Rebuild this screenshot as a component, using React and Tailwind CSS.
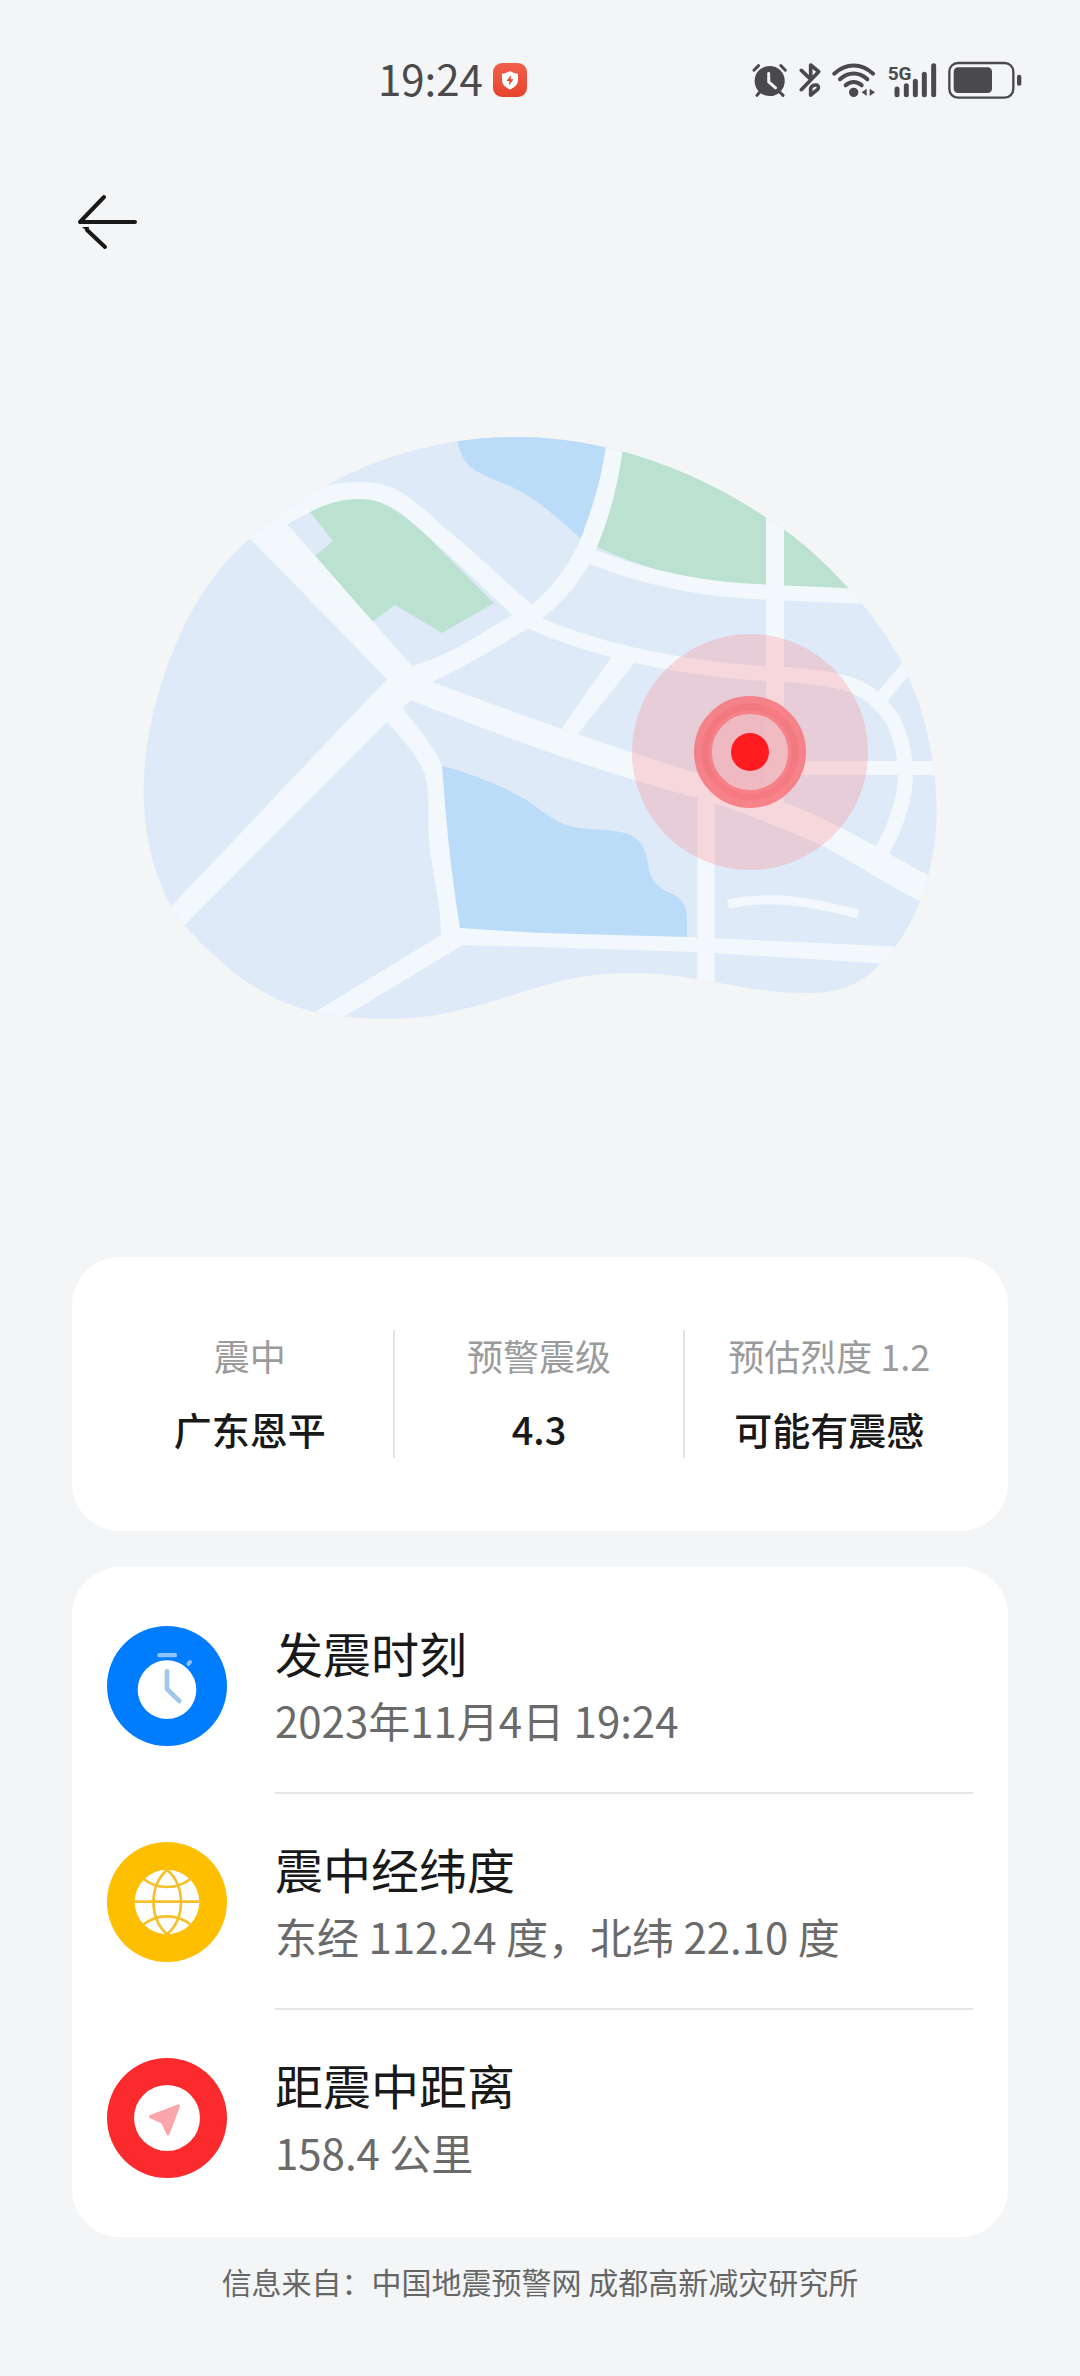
function StatusBar() {
  return (
    <header className="flex h-[104px] items-end justify-between pt-14 pl-[35%] pr-[58px] text-[#4a4a4c]">
      {/* Left: time and security badge */}
      <div className="flex h-12 items-center gap-[10px]">
        <span className="pb-1 text-[42px] leading-[44px]">19:24</span>
        <svg viewBox="0 0 34 34" className="h-[34px] w-[34px]" aria-hidden="true">
          <defs>
            <linearGradient id="badge" x1="0" y1="0" x2="0" y2="1">
              <stop offset="0" stopColor="#f0614c" />
              <stop offset="1" stopColor="#e8422c" />
            </linearGradient>
          </defs>
          <rect width="34" height="34" rx="9" fill="url(#badge)" />
          <path d="M17 8 C19 9.5 22 10.5 25 10.8 V17 C25 21.5 21.5 24.5 17 26.5 C12.5 24.5 9 21.5 9 17 V10.8 C12 10.5 15 9.5 17 8 Z" fill="#fff" />
          <path d="M18 12 L13.5 18 H16.5 L16 22.5 L20.5 16.3 H17.6 Z" fill="#e24a36" />
        </svg>
      </div>

      {/* Right: system icons */}
      <div className="flex h-12 items-center gap-[11px]">
        <svg viewBox="63 63 110 108" className="h-9 w-9" aria-hidden="true">
          <g stroke="currentColor" strokeWidth="9" strokeLinecap="round">
            <path d="M69 87 L83 73" />
            <path d="M151 73 L165 87" />
            <path d="M78 164 L88 152" />
            <path d="M158 164 L146 152" />
          </g>
          <circle cx="117" cy="120" r="46" fill="currentColor" />
          <path d="M114 97 V123 L135 141" fill="none" stroke="#f3f5f7" strokeWidth="9" strokeLinecap="round" strokeLinejoin="round" />
        </svg>
        <svg viewBox="205 63 66 108" className="h-9 w-[22px]" aria-hidden="true">
          <g fill="none" stroke="currentColor" strokeWidth="11" strokeLinecap="round" strokeLinejoin="round">
            <path d="M212 88 L238 113" />
            <path d="M240 110 V72 L264 92 L212 146" />
            <path d="M240 162 V142 C242 134 252 130 260 133 C265 137 264 142 260 146 Z" />
          </g>
        </svg>
        <svg viewBox="306 63 132 108" className="h-9 w-11" aria-hidden="true">
          <g fill="none" stroke="currentColor" strokeWidth="12" strokeLinecap="round">
            <path d="M313 98 C347 65 395 65 429 98" />
            <path d="M330 115 C355 92 387 92 412 115" />
            <path d="M347 133 C362 120 380 120 395 133" />
          </g>
          <circle cx="371" cy="154" r="14" fill="currentColor" />
          <path d="M410 143 V165 L395 154 Z M419 143 V165 L435 154 Z" fill="currentColor" />
        </svg>
        <svg viewBox="471 45 150 144" className="h-12 w-[50px]" aria-label="5G">
          <text x="473" y="116" fontSize="57" fontWeight="700" fill="currentColor" fontFamily="Roboto, sans-serif">5G</text>
          <g stroke="currentColor" strokeWidth="15" strokeLinecap="round">
            <path d="M501 144 V161" />
            <path d="M529 134 V161" />
            <path d="M556 121 V161" />
            <path d="M583 100 V161" />
            <path d="M611 74 V161" />
          </g>
        </svg>
        <svg viewBox="654 60 222 114" className="h-[38px] w-[74px]" aria-hidden="true">
          <rect x="658" y="66" width="192" height="104" rx="26" fill="none" stroke="currentColor" strokeWidth="7" />
          <rect x="671" y="79" width="115" height="77" rx="13" fill="currentColor" />
          <rect x="861" y="101" width="13" height="33" rx="6" fill="currentColor" />
        </svg>
      </div>
    </header>
  );
}

function EpicenterMap() {
  return (
    <svg viewBox="140 430 800 600" className="block w-full" role="img" aria-label="震中地图">
      <defs>
        <clipPath id="land">
          <path d="M517 437 C600 437 690 466 765 517 C803 540 833 570 863 605 C884 630 899 655 907 673 C930 725 939 780 936 831 C931 880 915 930 880 964 C862 984 840 992 813 993 C770 994 740 986 707 981 C680 976 655 973 630 973 C550 973 520 1000 430 1016 C395 1021 355 1020 315 1012 C265 1002 220 965 185 926 C155 890 141 830 144 776 C148 700 185 590 252 537 C330 470 420 437 517 437 Z" />
        </clipPath>
      </defs>

      <g clipPath="url(#land)">
        <rect x="140" y="430" width="800" height="600" fill="#dfeaf8" />

        {/* parks */}
        <g fill="#bbe1d0">
          <path d="M310 512 C340 495 370 495 387 506 C400 512 413 524 425 534 L494 603 L442 633 L395 605 L372 622 L315 556 L333 541 Z" />
          <path d="M618 430 L597 547 C647 570 700 585 765 586 L890 592 V430 Z" />
        </g>

        {/* lakes */}
        <g fill="#badcf9">
          <path d="M457 440 C462 462 470 468 480 473 C490 479 500 481 510 486 C535 497 560 520 580 538 L604 510 L612 430 H457 Z" />
          <path d="M442 766 C470 773 500 785 523 798 C540 808 553 821 566 825 C585 831 605 828 625 833 C642 838 645 850 648 863 C650 882 660 889 671 893 C684 899 687 908 687 920 V940 H455 Z" />
        </g>

        {/* roads */}
        <g fill="#f3f8fd">
          <path d="M230 518 L387 679 L412 690 L412 666 L288 525 L262 495 Z" />
          <path d="M387 679 L160 918 L172 938 L387 722 L402 708 L432 682 L412 666 Z" />
          <path d="M387 722 C405 741 414 753 421 766 C432 785 427 810 429 840 C432 875 441 900 441 935 L315 1012 L305 1025 L335 1022 L463 945 L540 947 L698 952 L890 964 L905 947 L687 937 L540 933 L460 928 C455 895 448 850 442 766 C436 748 415 725 402 707 Z" />
          <path d="M412 666 C450 655 475 637 512 615 L465 570 L420 529 C405 515 387 499 360 499 C340 499 325 504 310 512 L280 528 L270 510 L323 486 C350 480 375 481 390 487 C410 494 430 516 463 543 L532 605 C550 590 575 560 585 527 C595 500 602 475 607 440 L624 440 C619 480 612 510 597 547 L588 566 C575 588 562 602 545 616 L527 629 C500 645 470 664 432 682 Z" />
          <path d="M613 655 L562 728 L577 735 L635 662 Z" />
          <path d="M432 682 C500 707 580 737 697 773 C770 793 820 815 877 847 L940 882 V911 C900 893 860 866 823 846 C780 827 740 811 697 798 C600 772 500 736 408 699 Z" />
        </g>
        <g fill="none" stroke="#f3f8fd">
          <path d="M527 620 C600 653 680 668 767 674 C850 676 872 688 893 720 C914 765 908 805 880 855" strokeWidth="15" />
          <path d="M590 556 C640 576 700 590 765 592 L875 597" strokeWidth="15" />
          <path d="M775 490 V805" strokeWidth="18" />
          <path d="M706 785 V1000" strokeWidth="17" />
          <path d="M775 768 H940" strokeWidth="14" />
          <path d="M883 696 L915 658" strokeWidth="13" />
          <path d="M728 904 C770 896 800 899 858 914" strokeWidth="9" />
        </g>
      </g>

      {/* epicenter waves */}
      <circle cx="750" cy="752" r="118" fill="#ff7070" opacity="0.24" />
      <circle cx="750" cy="752" r="38" fill="#f0b4bc" opacity="0.8" />
      <circle cx="750" cy="752" r="47" fill="none" stroke="#f7737b" strokeWidth="18" opacity="0.85" />
      <circle cx="750" cy="752" r="45" fill="none" stroke="#f0626c" strokeWidth="7" opacity="0.25" />
      <circle cx="750" cy="752" r="19" fill="#ff1c20" />
    </svg>
  );
}

function ClockIcon() {
  return (
    <svg viewBox="0 0 360 360" className="h-[120px] w-[120px] shrink-0" aria-hidden="true">
      <circle cx="180" cy="180" r="180" fill="#007dff" />
      <circle cx="180" cy="191" r="88" fill="#fff" />
      <rect x="151" y="81" width="59" height="13" rx="5" fill="#8cc5ff" />
      <path d="M244 114 L249 108" stroke="#8cc5ff" strokeWidth="12" strokeLinecap="round" />
      <path d="M180 136 V189 L217 225" fill="none" stroke="#a0c8ea" strokeWidth="14" strokeLinecap="round" strokeLinejoin="round" />
    </svg>
  );
}

function GlobeIcon() {
  return (
    <svg viewBox="0 0 360 360" className="h-[120px] w-[120px] shrink-0" aria-hidden="true">
      <circle cx="180" cy="180" r="180" fill="#fdbf00" />
      <circle cx="180" cy="180" r="97" fill="#fff" />
      <g fill="none" stroke="#f6c02c" strokeWidth="8">
        <path d="M83 179 H277" />
        <path d="M180 83 C126 132 126 228 180 277" />
        <path d="M180 83 C236 132 236 228 180 277" />
        <path d="M106 108 C150 144 210 144 254 108" />
        <path d="M106 250 C150 214 210 214 254 250" />
      </g>
    </svg>
  );
}

function DistanceIcon() {
  return (
    <svg viewBox="0 0 360 360" className="h-[120px] w-[120px] shrink-0" aria-hidden="true">
      <circle cx="180" cy="180" r="180" fill="#fa2a2d" />
      <circle cx="180" cy="180" r="99" fill="#fff" />
      <path d="M214 144 L183 227 L167 192 L131 176 Z" fill="#fba6aa" stroke="#fba6aa" strokeWidth="10" strokeLinejoin="round" />
    </svg>
  );
}

const summary = [
  { label: "震中", value: "广东恩平" },
  { label: "预警震级", value: "4.3" },
  { label: "预估烈度 1.2", value: "可能有震感" },
];

const details = [
  { title: "发震时刻", text: "2023年11月4日 19:24", Icon: ClockIcon },
  { title: "震中经纬度", text: "东经 112.24 度，北纬 22.10 度", Icon: GlobeIcon },
  { title: "距震中距离", text: "158.4 公里", Icon: DistanceIcon },
];

export default function App() {
  return (
    <div lang="zh-CN" className="min-h-screen bg-[#f3f5f7] font-['Noto_Sans_CJK_SC',sans-serif] text-[#191919]">
      <StatusBar />

      <nav className="px-[76px] pt-[86px]">
        <button type="button" aria-label="返回" className="block h-16 w-16">
          <svg viewBox="0 0 64 64" className="h-16 w-16">
            <g fill="none" stroke="currentColor" strokeWidth="4" strokeLinecap="round" strokeLinejoin="round">
              <path d="M28 7 L4 32 H59" />
              <path d="M11 40 L29 57" />
            </g>
            <path d="M6 37 H13 L12 42 Z" fill="currentColor" />
          </svg>
        </button>
      </nav>

      <main className="pt-[176px]">
        <div className="px-[140px]">
          <EpicenterMap />
        </div>

        <div className="mt-[227px] flex flex-col gap-9 px-[72px]">
          {/* Summary */}
          <dl className="grid grid-cols-3 divide-x-2 divide-[#e3e4e5] rounded-[48px] bg-white px-[34px] py-[73px] text-center">
            {summary.map(({ label, value }) => (
              <div key={label} className="flex flex-col gap-6 pb-1">
                <dt className="text-[36px] leading-[50px] text-[#9b9b9b]">{label}</dt>
                <dd className="text-[38px] leading-[50px] font-medium">{value}</dd>
              </div>
            ))}
          </dl>

          {/* Details */}
          <ul className="rounded-[48px] bg-white px-[35px] py-[11px]">
            {details.map(({ title, text, Icon }) => (
              <li key={title} className="group flex h-[216px] items-center gap-12">
                <Icon />
                <div className="flex h-full flex-1 flex-col justify-center border-b-2 border-[#e7e7e7] pb-[2px] group-last:border-transparent">
                  <h2 className="text-[48px] leading-[72px]">{title}</h2>
                  <p className="text-[42px] leading-[64px] text-[#6a6a6a]">{text}</p>
                </div>
              </li>
            ))}
          </ul>
        </div>
      </main>

      <footer className="px-[72px] pt-[22px] pb-12 text-center text-[30px] leading-[44px] text-[#666666]">
        信息来自：中国地震预警网 成都高新减灾研究所
      </footer>
    </div>
  );
}
